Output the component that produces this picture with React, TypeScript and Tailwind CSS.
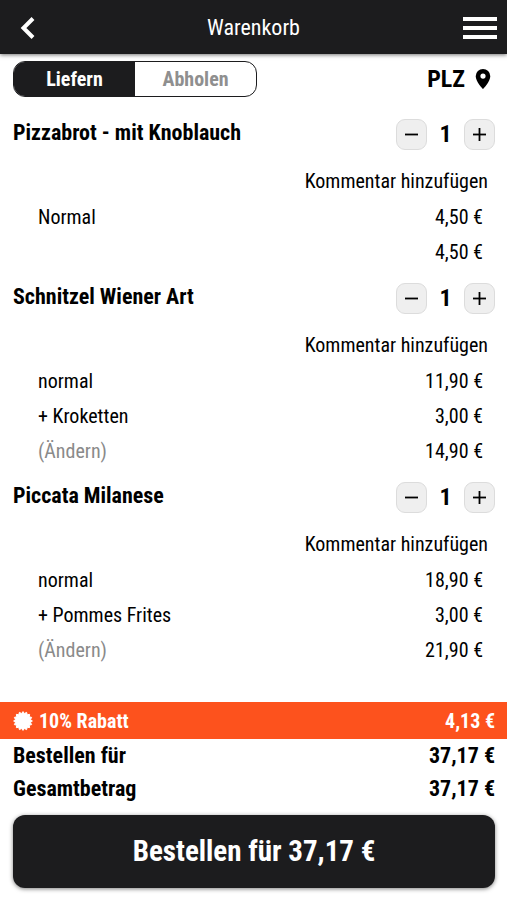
type Line = { label?: string; price: string; muted?: boolean }

const ITEMS: { name: string; count: number; lines: Line[] }[] = [
  {
    name: "Pizzabrot - mit Knoblauch",
    count: 1,
    lines: [{ label: "Normal", price: "4,50 €" }, { price: "4,50 €" }],
  },
  {
    name: "Schnitzel Wiener Art",
    count: 1,
    lines: [
      { label: "normal", price: "11,90 €" },
      { label: "+ Kroketten", price: "3,00 €" },
      { label: "(Ändern)", price: "14,90 €", muted: true },
    ],
  },
  {
    name: "Piccata Milanese",
    count: 1,
    lines: [
      { label: "normal", price: "18,90 €" },
      { label: "+ Pommes Frites", price: "3,00 €" },
      { label: "(Ändern)", price: "21,90 €", muted: true },
    ],
  },
]

function Header() {
  return (
    <header className="grid h-[54px] grid-cols-[1fr_auto_1fr] items-center bg-[#1c1c1e] px-2.5 pt-0.5 text-white shadow-[0_1px_4px_rgba(0,0,0,0.55)]">
      <button type="button" aria-label="Zurück" className="justify-self-start px-2.5">
        <svg width="16" height="22" viewBox="0 0 16 22" fill="none" stroke="currentColor" strokeWidth="4">
          <path d="M13 1.500 3.500 11 13 20.500" />
        </svg>
      </button>
      <h1 className="text-[22px]">Warenkorb</h1>
      <button type="button" aria-label="Menü" className="justify-self-end">
        <svg width="34" height="24" viewBox="0 0 34 24" fill="currentColor">
          <rect y="1" width="34" height="4" />
          <rect y="10" width="34" height="4" />
          <rect y="19" width="34" height="4" />
        </svg>
      </button>
    </header>
  )
}

function StepButton({ kind }: { kind: "minus" | "plus" }) {
  return (
    <button
      type="button"
      aria-label={kind === "minus" ? "Weniger" : "Mehr"}
      className="flex size-[31px] items-center justify-center rounded-[9px] border border-[#dcdcdc] bg-[#efefef]"
    >
      <svg width="13" height="13" viewBox="0 0 13 13" stroke="currentColor" strokeWidth="1.800">
        <path d="M0 6.500h13" />
        {kind === "plus" && <path d="M6.500 0v13" />}
      </svg>
    </button>
  )
}

function CartItem({ name, count, lines }: (typeof ITEMS)[number]) {
  return (
    <section className="pb-3.5">
      <div className="flex h-[30px] items-center justify-between pr-3 pl-[13px]">
        <h2 className="pb-0.5 text-[22px] leading-6 font-bold">{name}</h2>
        <div className="flex items-center">
          <StepButton kind="minus" />
          <span className="w-[37px] text-center text-2xl font-bold">{count}</span>
          <StepButton kind="plus" />
        </div>
      </div>
      <div className="mt-3.5 flex h-9 items-center justify-end pr-[19px]">
        <button type="button">Kommentar hinzufügen</button>
      </div>
      <ul>
        {lines.map((line, i) => (
          <li key={i} className="flex h-[35px] items-center justify-between pr-6 pl-[38px]">
            {line.muted ? (
              <button type="button" className="text-[#8a8a8a]">{line.label}</button>
            ) : (
              <span>{line.label}</span>
            )}
            <span>{line.price}</span>
          </li>
        ))}
      </ul>
    </section>
  )
}

// Filled seal with 16 small teeth
function Seal() {
  const points = Array.from({ length: 32 }, (_, i) => {
    const r = i % 2 ? 7.6 : 9.4
    const a = (i * Math.PI) / 16
    return `${10 + r * Math.sin(a)},${10 - r * Math.cos(a)}`
  }).join(" ")
  return (
    <svg width="20" height="20" viewBox="0 0 20 20" fill="currentColor" stroke="currentColor" strokeLinejoin="round">
      <polygon points={points} />
    </svg>
  )
}

function Total({ label }: { label: string }) {
  return (
    <div className="flex h-[33px] items-center justify-between pt-0.5 pr-3 pl-[13px] text-[22px] font-bold">
      <span>{label}</span>
      <span>37,17 €</span>
    </div>
  )
}

export default function App() {
  return (
    <div className="flex min-h-screen flex-col bg-white font-['Roboto_Condensed',Roboto,sans-serif] text-xl text-black">
      <Header />

      <div className="mt-[7px] flex h-9 items-center justify-between pr-4 pl-[13px]">
        <div className="flex h-9 w-[244px] overflow-hidden rounded-xl border border-[#1c1c1e] font-bold">
          <button type="button" aria-pressed="true" className="flex-1 bg-[#1c1c1e] text-white">Liefern</button>
          <button type="button" aria-pressed="false" className="flex-1 text-[#8f8f8f]">Abholen</button>
        </div>
        <button type="button" className="flex items-center gap-2.5 text-2xl font-bold">
          PLZ
          <svg width="16" height="20" viewBox="0 0 15 20" fill="currentColor">
            <path fillRule="evenodd" d="M7.500 0A7.300 7.300 0 0 0 .2 7.200C.2 12.500 7.500 20 7.500 20s7.300-7.500 7.300-12.800A7.300 7.300 0 0 0 7.500 0Zm0 9.700a2.600 2.600 0 1 1 0-5.200 2.600 2.600 0 0 1 0 5.200Z" />
          </svg>
        </button>
      </div>

      <main className="mt-[22px] flex-1">
        {ITEMS.map((item) => (
          <CartItem key={item.name} {...item} />
        ))}
      </main>

      <footer>
        <div className="flex h-[37px] items-center justify-between bg-[#fd521d] pr-3 pl-[13px] font-bold text-white">
          <span className="flex items-center gap-1.5">
            <Seal />
            10% Rabatt
          </span>
          <span>4,13 €</span>
        </div>
        <Total label="Bestellen für" />
        <Total label="Gesamtbetrag" />
        <div className="pt-2.5 pr-3 pb-3 pl-[13px]">
          <button
            type="button"
            className="h-[73px] w-full rounded-xl bg-[#1c1c1e] text-[29px] font-bold text-white shadow-[0_1px_4px_rgba(0,0,0,0.5)]"
          >
            Bestellen für 37,17 €
          </button>
        </div>
      </footer>
    </div>
  )
}
